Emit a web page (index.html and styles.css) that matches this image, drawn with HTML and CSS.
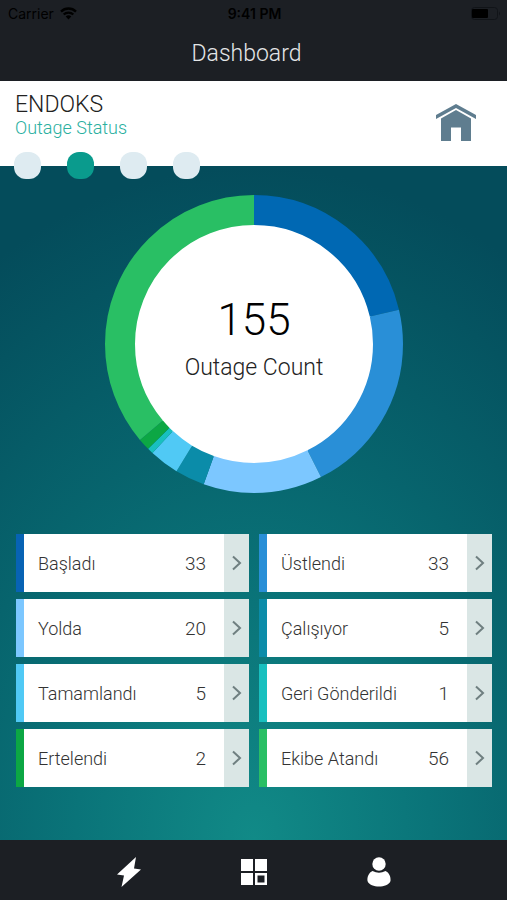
FILE: index.html
```html
<!DOCTYPE html>
<html lang="en">
<head>
    <meta charset="UTF-8">
    <meta name="viewport" content="width=device-width, initial-scale=1">
    <title>Dashboard</title>
    <link rel="stylesheet" href="styles.css">
</head>
<body>
<div class="app">
    <header class="top">
        <div class="status-bar">
            <div class="carrier">
                <span>Carrier</span>
                <svg width="17" height="13" viewBox="0 0 17 13" fill="none" stroke="#000" stroke-width="2.4">
                    <path d="M1 4.600A10.700 10.700 0 0 1 16 4.600M3.700 7.500A7 7 0 0 1 13.300 7.500"/>
                    <path d="M8.500 12.500L5.700 9.600A4 4 0 0 1 11.300 9.600Z" fill="#000" stroke="none"/>
                </svg>
            </div>
            <span class="time">9:41 PM</span>
            <div class="battery">
                <svg width="30" height="13" viewBox="0 0 30 13">
                    <rect x="0.500" y="0.500" width="26" height="12" rx="3" fill="none" stroke="#111418"/>
                    <rect x="1" y="2" width="16" height="9" rx="1" fill="#000"/>
                    <path d="M28 4.500q2 2 0 4z" fill="#111418"/>
                </svg>
            </div>
        </div>
        <h1>Dashboard</h1>
    </header>

    <section class="title-bar">
        <div>
            <h2>ENDOKS</h2>
            <p>Outage Status</p>
        </div>
        <button class="home" type="button" aria-label="Home">
            <svg width="42" height="38" viewBox="0 0 42 38" fill="#5f7d8f">
                <path d="M21 0L41 11V15L21 4L1 15V11Z"/>
                <path d="M21 6L36 14.500V37H26V23.500H16V37H6V14.500Z"/>
            </svg>
        </button>
        <div class="dots">
            <button type="button" aria-label="Page 1"></button>
            <button type="button" aria-label="Page 2" class="current"></button>
            <button type="button" aria-label="Page 3"></button>
            <button type="button" aria-label="Page 4"></button>
        </div>
    </section>

    <main>
        <div class="chart">
            <!-- one unit of pathLength = one outage -->
            <svg viewBox="0 0 298 298">
                <circle cx="149" cy="149" r="120" fill="#fff"/>
                <g fill="none" stroke-width="30" transform="rotate(-90 149 149)">
                    <circle cx="149" cy="149" r="134" pathLength="155" stroke="#0068b3" stroke-dasharray="33 122"/>
                    <circle cx="149" cy="149" r="134" pathLength="155" stroke="#298fd7" stroke-dasharray="33 122" stroke-dashoffset="-33"/>
                    <circle cx="149" cy="149" r="134" pathLength="155" stroke="#7cc7ff" stroke-dasharray="20 135" stroke-dashoffset="-66"/>
                    <circle cx="149" cy="149" r="134" pathLength="155" stroke="#0b8ca9" stroke-dasharray="5 150" stroke-dashoffset="-86"/>
                    <circle cx="149" cy="149" r="134" pathLength="155" stroke="#50c9f5" stroke-dasharray="5 150" stroke-dashoffset="-91"/>
                    <circle cx="149" cy="149" r="134" pathLength="155" stroke="#18c0bf" stroke-dasharray="1 154" stroke-dashoffset="-96"/>
                    <circle cx="149" cy="149" r="134" pathLength="155" stroke="#0ca744" stroke-dasharray="2 153" stroke-dashoffset="-97"/>
                    <circle cx="149" cy="149" r="134" pathLength="155" stroke="#29bf64" stroke-dasharray="56 99" stroke-dashoffset="-99"/>
                </g>
            </svg>
            <div class="total">
                <strong>155</strong>
                <span>Outage Count</span>
            </div>
        </div>

        <div class="list">
            <a href="#" class="item basladi"><span class="name">Başladı</span><span class="num">33</span><span class="arrow"><svg width="10" height="16" viewBox="0 0 10 16"><path d="M1 1.500L8 8L1 14.500"/></svg></span></a>
            <a href="#" class="item ustlendi"><span class="name">Üstlendi</span><span class="num">33</span><span class="arrow"><svg width="10" height="16" viewBox="0 0 10 16"><path d="M1 1.500L8 8L1 14.500"/></svg></span></a>
            <a href="#" class="item yolda"><span class="name">Yolda</span><span class="num">20</span><span class="arrow"><svg width="10" height="16" viewBox="0 0 10 16"><path d="M1 1.500L8 8L1 14.500"/></svg></span></a>
            <a href="#" class="item calisiyor"><span class="name">Çalışıyor</span><span class="num">5</span><span class="arrow"><svg width="10" height="16" viewBox="0 0 10 16"><path d="M1 1.500L8 8L1 14.500"/></svg></span></a>
            <a href="#" class="item tamamlandi"><span class="name">Tamamlandı</span><span class="num">5</span><span class="arrow"><svg width="10" height="16" viewBox="0 0 10 16"><path d="M1 1.500L8 8L1 14.500"/></svg></span></a>
            <a href="#" class="item geri"><span class="name">Geri Gönderildi</span><span class="num">1</span><span class="arrow"><svg width="10" height="16" viewBox="0 0 10 16"><path d="M1 1.500L8 8L1 14.500"/></svg></span></a>
            <a href="#" class="item ertelendi"><span class="name">Ertelendi</span><span class="num">2</span><span class="arrow"><svg width="10" height="16" viewBox="0 0 10 16"><path d="M1 1.500L8 8L1 14.500"/></svg></span></a>
            <a href="#" class="item ekibe"><span class="name">Ekibe Atandı</span><span class="num">56</span><span class="arrow"><svg width="10" height="16" viewBox="0 0 10 16"><path d="M1 1.500L8 8L1 14.500"/></svg></span></a>
        </div>
    </main>

    <nav class="tabs">
        <a href="#" aria-label="Outages">
            <svg width="26" height="30" viewBox="0 0 26 30"><path d="M20 0L1 17.500L8 18.500L5.500 30L25 12.500L18 11.500Z"/></svg>
        </a>
        <a href="#" aria-label="Dashboard">
            <svg width="26" height="26" viewBox="0 0 26 26"><path fill-rule="evenodd" d="M0 0H12V12H0ZM14 0H26V12H14ZM0 14H12V26H0ZM14 14H26V26H14ZM16.500 16.500V23.500H23.500V16.500Z"/></svg>
        </a>
        <a href="#" aria-label="Profile">
            <svg width="24" height="30" viewBox="0 0 24 30"><circle cx="12" cy="7" r="6.700"/><path d="M5.500 14Q12 17.500 18.500 14C22 15.500 24 19.500 23.500 24C22 28 17 29.500 12 29.500S2 28 0.500 24C0 19.500 2 15.500 5.500 14Z"/></svg>
        </a>
    </nav>
</div>
</body>
</html>
```
FILE: styles.css
```css
* {
    padding: 0;
    margin: 0;
    box-sizing: border-box;
}

body {
    font-family: Roboto, "Noto Sans", sans-serif;
    font-weight: 300;
    color: #333;
}

a {
    text-decoration: none;
    color: inherit;
}

button {
    border: 0;
    background: none;
    cursor: pointer;
}

svg {
    display: block;
}

.app {
    min-height: 100vh;
    display: flex;
    flex-direction: column;
}

.top {
    background: #1c1f24;
    padding-bottom: 11px;
}

.status-bar {
    display: grid;
    grid-template-columns: 1fr auto 1fr;
    align-items: center;
    height: 26px;
    padding: 0 6px 0 8px;
    font-family: Inter, "Liberation Sans", sans-serif;
    font-size: 14px;
    font-weight: 400;
    color: #000;
}

.carrier {
    display: flex;
    align-items: center;
    gap: 6px;
}

.time {
    font-weight: 600;
}

.battery {
    justify-self: end;
}

.top h1 {
    padding: 12px 14px 0 0;
    line-height: 32px;
    font-size: 23px;
    font-weight: 300;
    text-align: center;
    color: #e4e6e8;
}

.title-bar {
    position: relative;
    display: flex;
    justify-content: space-between;
    align-items: flex-start;
    min-height: 85px;
    padding: 12px 30px 20px 15px;
    background: #fff;
}

.title-bar h2 {
    font-size: 23px;
    line-height: 24px;
    font-weight: 300;
    color: #222;
}

.title-bar p {
    font-size: 18px;
    line-height: 22px;
    color: #2ab09f;
}

.home {
    padding-top: 11px;
}

.dots {
    position: absolute;
    left: 14px;
    bottom: -13px;
    display: flex;
    gap: 26px;
}

.dots button {
    width: 27px;
    height: 27px;
    border-radius: 12px;
    background: #deebf1;
}

.dots .current {
    background: #0a9b8d;
}

main {
    flex: 1;
    padding: 29px 15px 40px 16px;
    background: radial-gradient(ellipse 100% 100% at 50% 100%, #118a87 0%, #0a7479 35%, #07646d 60%, #044c5b 100%);
}

.chart {
    position: relative;
    max-width: 298px;
    margin: 0 auto 41px;
}

.total {
    position: absolute;
    inset: 0;
    display: flex;
    flex-direction: column;
    align-items: center;
    justify-content: center;
    padding-bottom: 8px;
    color: #222;
}

.total strong {
    font-size: 44px;
    line-height: 56px;
    font-weight: 300;
    color: #000;
}

.total span {
    font-size: 23px;
    line-height: 40px;
}

.list {
    display: grid;
    grid-template-columns: 1fr 1fr;
    gap: 7px 10px;
}

.item {
    display: flex;
    align-items: center;
    height: 58px;
    border-left: 8px solid;
    background: #fff;
    font-size: 18px;
}

.name,
.num {
    color: #333;
}

.name {
    flex: 1;
    padding-left: 14px;
    white-space: nowrap;
}

.num {
    padding-right: 18px;
    font-size: 19px;
}

.arrow {
    align-self: stretch;
    width: 25px;
    display: flex;
    align-items: center;
    justify-content: center;
    background: #dae6e5;
}

.arrow path {
    fill: none;
    stroke: #6f7f80;
    stroke-width: 2;
}

.basladi { border-color: #0763b4; }
.ustlendi { border-color: #298fd7; }
.yolda { border-color: #7cc7ff; }
.calisiyor { border-color: #0b8ca9; }
.tamamlandi { border-color: #50c9f5; }
.geri { border-color: #18c0bf; }
.ertelendi { border-color: #0ca744; }
.ekibe { border-color: #29bf64; }

.tabs {
    display: flex;
    justify-content: center;
    gap: 26px;
    height: 60px;
    background: #1c1f24;
}

.tabs a {
    width: 99px;
    display: flex;
    align-items: center;
    justify-content: center;
    padding-top: 3px;
}

.tabs svg {
    fill: #fff;
}
```
